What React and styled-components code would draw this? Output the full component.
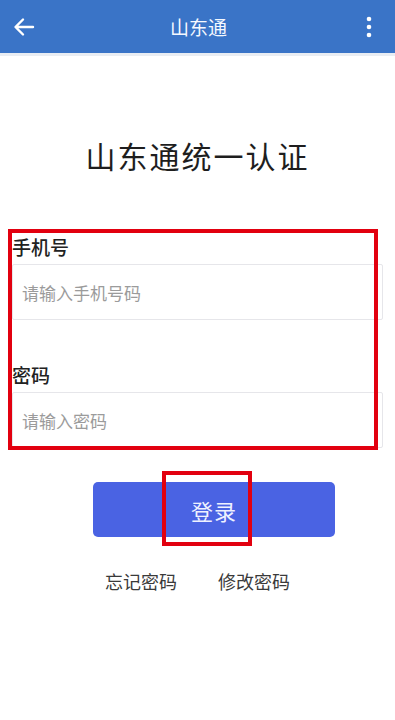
import React from "react";
import styled, { createGlobalStyle } from "styled-components";

const Global = createGlobalStyle`
  html, body { margin: 0; padding: 0; background: #fff; }
  body { font-family: "Noto Sans CJK SC", "Noto Sans", sans-serif; }
  * { box-sizing: border-box; }
`;

const Page = styled.div`
  width: 395px;
  height: 720px;
  background: #fff;
  display: flex;
  flex-direction: column;
`;

const Header = styled.header`
  height: 53px;
  background: #3a74c7;
  display: flex;
  align-items: center;
  justify-content: space-between;
  padding: 0 14px 0 12px;
  color: #fff;
  border-bottom: 3px solid #e9edf3;
  box-sizing: content-box;
`;

const HeaderTitle = styled.div`
  font-size: 19px;
  color: #f4f8ff;
  padding-left: 4px;
`;

const IconBtn = styled.div`
  width: 24px;
  height: 24px;
  display: flex;
  align-items: center;
  justify-content: center;
`;

const Title = styled.h1`
  margin: 81px 0 0;
  text-align: center;
  font-size: 30px;
  font-weight: 400;
  letter-spacing: 2px;
  color: #1e1e1e;
  line-height: 36px;
`;

const FormSection = styled.div`
  position: relative;
  margin: 61px 12px 0 12px;
  display: flex;
  flex-direction: column;
`;

const Annotation = styled.div`
  position: absolute;
  border: 4px solid #e2000f;
  pointer-events: none;
  left: ${p => p.$l}px;
  top: ${p => p.$t}px;
  right: ${p => p.$r}px;
  bottom: ${p => p.$b}px;
`;

const Label = styled.div`
  font-size: 19px;
  color: #222;
  line-height: 22px;
  height: 30px;
  padding-top: 2px;
  font-weight: 500;
  margin-top: ${p => p.$mt || 0}px;
`;

const Input = styled.div`
  height: 56px;
  border: 1px solid #e6e6ea;
  border-radius: 2px;
  display: flex;
  align-items: center;
  padding-left: 9px;
  font-size: 17px;
  color: #9b9b9b;
`;

const ButtonWrap = styled.div`
  position: relative;
  margin: 34px 60px 0 93px;
`;

const LoginButton = styled.div`
  height: 55px;
  background: #4a63e3;
  border-radius: 5px;
  display: flex;
  align-items: center;
  justify-content: center;
  color: #eef1ff;
  font-size: 22px;
  letter-spacing: 1px;
`;

const Links = styled.div`
  display: flex;
  margin-top: 31px;
  padding-left: 105px;
  gap: 41px;
`;

const LinkText = styled.span`
  font-size: 18px;
  color: #3a3a3a;
`;

export default function App() {
  return (
    <Page>
      <Global />
      <Header>
        <IconBtn>
          <svg width="22" height="20" viewBox="0 0 22 20" fill="none" stroke="#fff" strokeWidth="2.4" strokeLinecap="round" strokeLinejoin="round">
            <path d="M20 10H3M10 2.5L2.5 10 10 17.5" />
          </svg>
        </IconBtn>
        <HeaderTitle>山东通</HeaderTitle>
        <IconBtn>
          <svg width="6" height="24" viewBox="0 0 6 24" fill="#fff">
            <circle cx="3" cy="4" r="2.3" />
            <circle cx="3" cy="12" r="2.3" />
            <circle cx="3" cy="20" r="2.3" />
          </svg>
        </IconBtn>
      </Header>
      <Title>山东通统一认证</Title>
      <FormSection>
        <Label>手机号</Label>
        <Input>请输入手机号码</Input>
        <Label $mt={42}>密码</Label>
        <Input>请输入密码</Input>
        <Annotation $l={-4} $t={-5} $r={5} $b={-2} />
      </FormSection>
      <ButtonWrap>
        <LoginButton>登录</LoginButton>
        <Annotation $l={69} $t={-11} $r={83} $b={-9} />
      </ButtonWrap>
      <Links>
        <LinkText>忘记密码</LinkText>
        <LinkText>修改密码</LinkText>
      </Links>
    </Page>
  );
}
